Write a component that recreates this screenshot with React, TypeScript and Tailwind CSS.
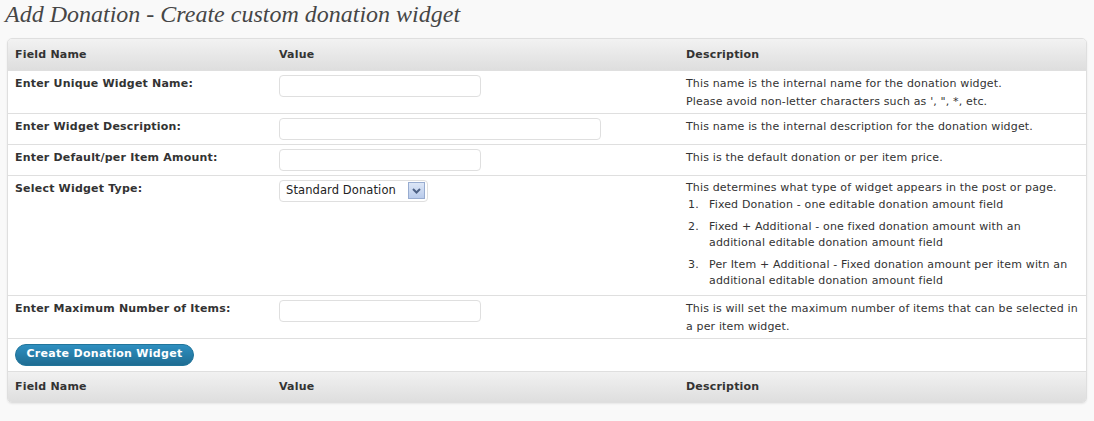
import React from 'react'

const font = { fontFamily: '"DejaVu Sans", Verdana, sans-serif' }

function TextInput({ wide = false }: { wide?: boolean }) {
  return (
    <input
      type="text"
      className={`block h-[22px] rounded-[4px] border border-[#dfdfdf] bg-white px-1 text-[11px] outline-none ${
        wide ? 'w-[322px]' : 'w-[202px]'
      }`}
    />
  )
}

function WidgetSelect() {
  return (
    <div className="flex h-[22px] w-[149px] items-center justify-between rounded-[4px] border border-[#dfdfdf] bg-white pl-[6px] pr-[2px]">
      <span className="text-[11.5px] tracking-[0.1px] text-[#222]">Standard Donation</span>
      <span className="flex h-[17px] w-[17px] items-center justify-center border border-[#98acd0] bg-gradient-to-b from-[#dce6f6] to-[#b9cbeb]">
        <svg width="9" height="6" viewBox="0 0 9 6">
          <path d="M1 1 L4.5 4.5 L8 1" fill="none" stroke="#4d6185" strokeWidth="2" />
        </svg>
      </span>
    </div>
  )
}

function HeadRow() {
  return (
    <tr className="h-[31px] bg-gradient-to-b from-[#f2f2f2] to-[#dedede] text-left text-[11px] font-bold tracking-[0.2px] text-[#333]">
      <th className="px-[7px] pt-[1px] align-middle font-bold">Field Name</th>
      <th className="px-[7px] pt-[1px] align-middle font-bold">Value</th>
      <th className="px-[7px] pt-[1px] align-middle font-bold">Description</th>
    </tr>
  )
}

const items = [
  'Fixed Donation - one editable donation amount field',
  'Fixed + Additional - one fixed donation amount with an additional editable donation amount field',
  'Per Item + Additional - Fixed donation amount per item witn an additional editable donation amount field',
]

export default function App() {
  const cell = 'border-t border-[#dfdfdf] bg-white px-[7px] align-top'
  const label = `${cell} pt-[4px] text-[11px] font-bold leading-[18px] tracking-[0.2px]`
  const desc = 'text-[11px] tracking-[0.15px] text-[#333]'
  return (
    <div className="min-h-[421px] bg-[#f9f9f9] px-[7px] text-[#333]" style={font}>
      <h2
        className="-ml-[2px] h-[38px] text-[24px] leading-[28px] text-[#464646] italic"
        style={{ fontFamily: '"Liberation Serif", Georgia, serif', fontWeight: 400 }}
      >
        Add Donation - Create custom donation widget
      </h2>
      <div className="overflow-hidden rounded-[5px] border border-[#dfdfdf] shadow-[0_1px_2px_rgba(0,0,0,0.08)]">
        <table className="w-full table-fixed border-collapse text-[11px]">
          <colgroup>
            <col className="w-[264px]" />
            <col className="w-[407px]" />
            <col />
          </colgroup>
          <thead>
            <HeadRow />
          </thead>
          <tbody>
            <tr className="h-[43px]">
              <td className={label}>Enter Unique Widget Name:</td>
              <td className={`${cell} pt-[4px]`}>
                <TextInput />
              </td>
              <td className={`${cell} ${desc} pt-[4px] leading-[18px]`}>
                This name is the internal name for the donation widget.
                <br />
                Please avoid non-letter characters such as ', ", *, etc.
              </td>
            </tr>
            <tr className="h-[31px]">
              <td className={label}>Enter Widget Description:</td>
              <td className={`${cell} pt-[4px]`}>
                <TextInput wide />
              </td>
              <td className={`${cell} ${desc} pt-[4px] leading-[18px]`}>
                This name is the internal description for the donation widget.
              </td>
            </tr>
            <tr className="h-[31px]">
              <td className={label}>Enter Default/per Item Amount:</td>
              <td className={`${cell} pt-[4px]`}>
                <TextInput />
              </td>
              <td className={`${cell} ${desc} pt-[4px] leading-[18px]`}>
                This is the default donation or per item price.
              </td>
            </tr>
            <tr className="h-[120px]">
              <td className={label}>Select Widget Type:</td>
              <td className={`${cell} pt-[4px]`}>
                <WidgetSelect />
              </td>
              <td className={`${cell} ${desc} pt-[3px] pb-[6px]`}>
                <div className="leading-[18px]">This determines what type of widget appears in the post or page.</div>
                <ol className="leading-[16px]">
                  {items.map((text, i) => (
                    <li key={i} className={`flex ${i < 2 ? 'mb-[6px]' : ''}`}>
                      <span className="w-[23px] shrink-0 pl-[2px]">{i + 1}.</span>
                      <span>{text}</span>
                    </li>
                  ))}
                </ol>
              </td>
            </tr>
            <tr className="h-[43px]">
              <td className={label}>Enter Maximum Number of Items:</td>
              <td className={`${cell} pt-[4px]`}>
                <TextInput />
              </td>
              <td className={`${cell} ${desc} pt-[4px] leading-[18px]`}>
                This is will set the maximum number of items that can be selected in a per item widget.
              </td>
            </tr>
            <tr className="h-[33px]">
              <td colSpan={3} className={`${cell} pt-[5px]`}>
                <button className="h-[22px] w-[179px] rounded-full border border-[#21759b] bg-gradient-to-b from-[#2e8fc0] to-[#1f6d93] text-[11px] font-bold tracking-[0.3px] text-white">
                  Create Donation Widget
                </button>
              </td>
            </tr>
          </tbody>
          <tfoot className="border-t border-[#dfdfdf]">
            <HeadRow />
          </tfoot>
        </table>
      </div>
    </div>
  )
}
